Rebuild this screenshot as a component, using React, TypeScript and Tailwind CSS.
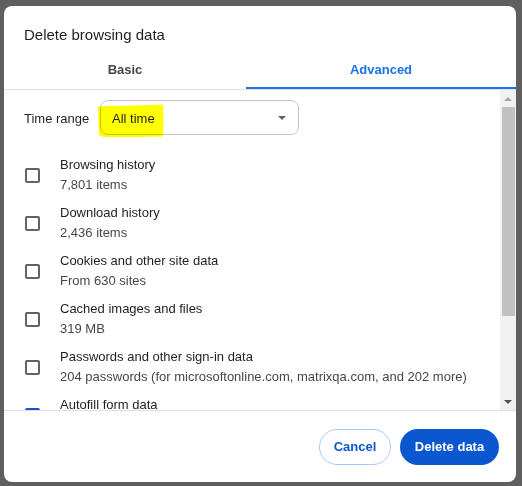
import { Check } from 'lucide-react';

interface Item {
    title: string;
    sub?: string;
    checked?: boolean;
}

const items: Item[] = [
    { title: 'Browsing history', sub: '7,801 items' },
    { title: 'Download history', sub: '2,436 items' },
    { title: 'Cookies and other site data', sub: 'From 630 sites' },
    { title: 'Cached images and files', sub: '319 MB' },
    {
        title: 'Passwords and other sign-in data',
        sub: '204 passwords (for microsoftonline.com, matrixqa.com, and 202 more)',
    },
    { title: 'Autofill form data', sub: '', checked: true },
];

function Checkbox({ checked }: { checked?: boolean }) {
    if (checked)
        return (
            <span className="flex h-[15px] w-[15px] shrink-0 items-center justify-center rounded-[2px] bg-[#0b57d0]">
                <Check size={12} strokeWidth={3} className="text-white" />
            </span>
        );
    return <span className="h-[15px] w-[15px] shrink-0 rounded-[2px] border-2 border-[#5f6368]" />;
}

function Scrollbar() {
    return (
        <div className="flex w-[16px] shrink-0 flex-col items-center bg-[#f1f1f1]">
            <div className="flex h-[17px] w-full items-center justify-center">
                <span className="h-0 w-0 border-x-[4px] border-b-[4px] border-x-transparent border-b-[#a3a3a3]" />
            </div>
            <div className="h-[209px] w-[13px] bg-[#c1c1c1]" />
            <div className="flex-1" />
            <div className="flex h-[17px] w-full items-center justify-center">
                <span className="h-0 w-0 border-x-[4px] border-t-[4px] border-x-transparent border-t-[#505050]" />
            </div>
        </div>
    );
}

export default function App() {
    return (
        <div
            className="h-[486px] w-[522px] overflow-hidden bg-[#5f5f5f] pl-[4px] pt-[6px]"
            style={{ fontFamily: '"Liberation Sans", Arial, sans-serif' }}
        >
            <div className="flex h-[476px] w-[512px] flex-col overflow-hidden rounded-[8px] bg-white">
                {/* Título */}
                <div className="h-[39px] pl-[20px] pt-[19px] text-[15px] leading-[20px] text-[#1f1f1f]">
                    Delete browsing data
                </div>

                {/* Pestañas */}
                <div className="flex h-[45px] border-b border-[#e0e0e0] text-[13px] font-semibold leading-[20px]">
                    <div className="flex w-[242px] items-end justify-center pb-[9px] text-[#444746]">Basic</div>
                    <div className="relative flex w-[270px] items-end justify-center pb-[9px] text-[#1a73e8]">
                        Advanced
                        <span className="absolute bottom-0 left-0 h-[2px] w-full bg-[#1a73e8]" />
                    </div>
                </div>

                {/* Contenido con scroll */}
                <div className="flex h-[321px] border-b border-[#e0e0e0]">
                    <div className="flex-1 overflow-hidden text-[13px] leading-[20px]">
                        <div className="flex items-center pl-[20px] pt-[10px]">
                            <span className="w-[76px] pt-[2px] text-[#1f1f1f]">Time range</span>
                            <div className="relative flex h-[35px] w-[199px] items-center rounded-[8px] border border-[#c4c7c5] pl-[11px] pr-[12px]">
                                <svg
                                    className="absolute -left-[4px] top-[2px] mix-blend-multiply"
                                    width="68"
                                    height="35"
                                    viewBox="0 0 68 35"
                                >
                                    <path
                                        d="M1 4 L8 3 L40 2.5 L66 1.5 L66.5 20 L66 33.5 L40 34 L7 34 L2 32 L1.5 20 Z"
                                        fill="#ffff00"
                                    />
                                </svg>
                                <span className="relative flex-1 pt-[2px] text-[#1f1f1f]">All time</span>
                                <span className="h-0 w-0 border-x-[4px] border-t-[4px] border-x-transparent border-t-[#5f6368]" />
                            </div>
                        </div>

                        <div className="flex flex-col gap-[8px] pt-[20px]">
                            {items.map(it => (
                                <div key={it.title} className="flex items-center pl-[21px]">
                                    <Checkbox checked={it.checked} />
                                    <div className="ml-[20px] flex flex-col">
                                        <span className="whitespace-nowrap text-[#1f1f1f]">{it.title}</span>
                                        <span className="h-[20px] whitespace-nowrap text-[#474747]">{it.sub}</span>
                                    </div>
                                </div>
                            ))}
                        </div>
                    </div>
                    <Scrollbar />
                </div>

                {/* Pie */}
                <div className="flex justify-end gap-[9px] pr-[17px] pt-[18px] text-[13px] font-semibold">
                    <button className="h-[36px] w-[72px] rounded-full border border-[#a8c7fa] text-[#0b57d0]">
                        Cancel
                    </button>
                    <button className="h-[36px] w-[99px] rounded-full bg-[#0b57d0] text-white">
                        Delete data
                    </button>
                </div>
            </div>
        </div>
    );
}
